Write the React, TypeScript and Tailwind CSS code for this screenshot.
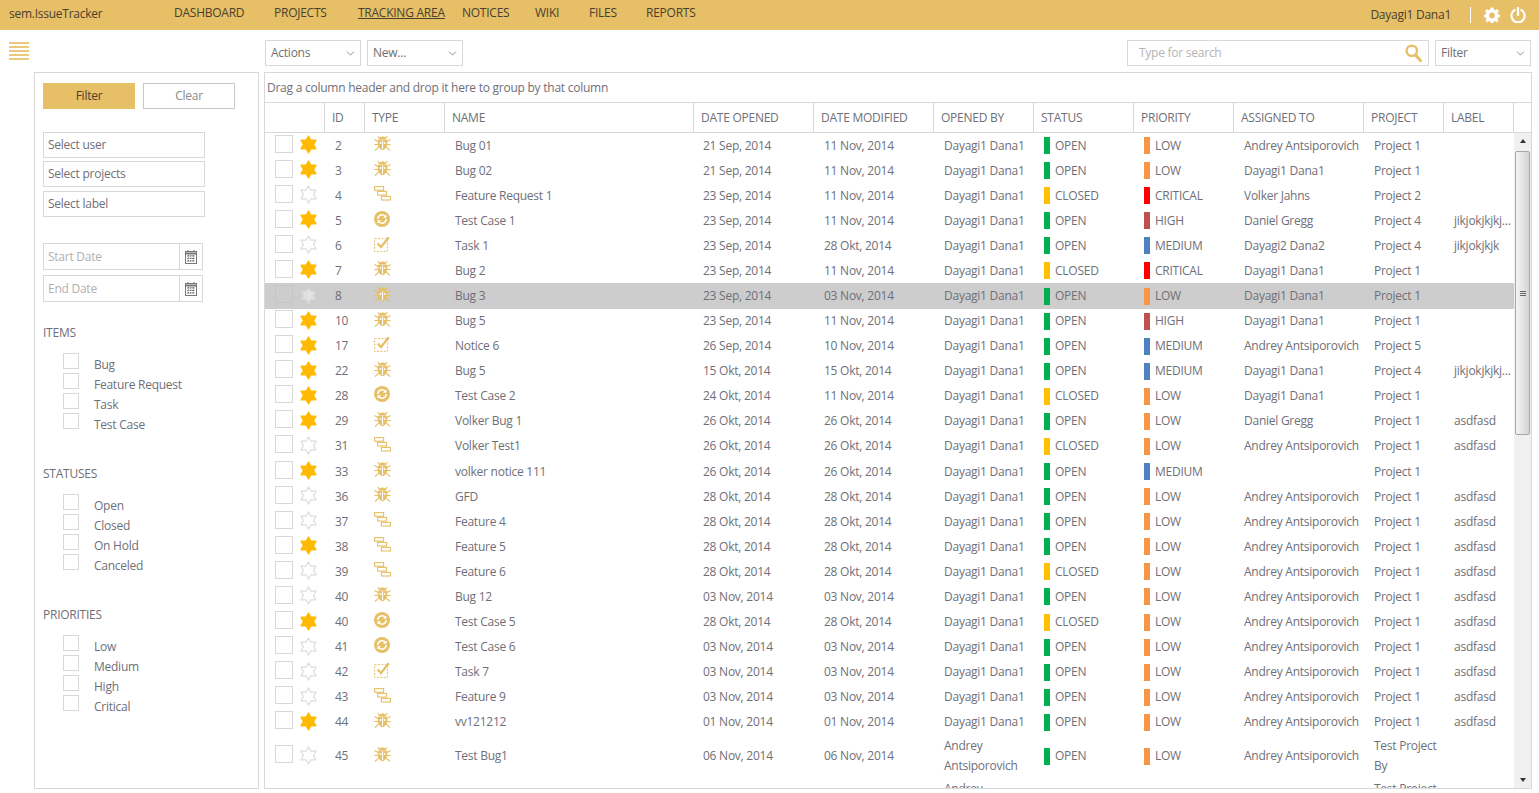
import React from "react";
import { ChevronDown } from "lucide-react";

const AD = "Andrey Antsiporovich";
const DD = "Dayagi1 Dana1";
type R = [number, number, string, string, string, string, string, string, string, string, string, string];
const rows: R[] = [
  [2, 1, "bug", "Bug 01", "21 Sep, 2014", "11 Nov, 2014", DD, "OPEN", "LOW", AD, "Project 1", ""],
  [3, 1, "bug", "Bug 02", "21 Sep, 2014", "11 Nov, 2014", DD, "OPEN", "LOW", DD, "Project 1", ""],
  [4, 0, "feature", "Feature Request 1", "23 Sep, 2014", "11 Nov, 2014", DD, "CLOSED", "CRITICAL", "Volker Jahns", "Project 2", ""],
  [5, 1, "test", "Test Case 1", "23 Sep, 2014", "11 Nov, 2014", DD, "OPEN", "HIGH", "Daniel Gregg", "Project 4", "jikjokjkjkj..."],
  [6, 0, "task", "Task 1", "23 Sep, 2014", "28 Okt, 2014", DD, "OPEN", "MEDIUM", "Dayagi2 Dana2", "Project 4", "jikjokjkjk"],
  [7, 1, "bug", "Bug 2", "23 Sep, 2014", "11 Nov, 2014", DD, "CLOSED", "CRITICAL", DD, "Project 1", ""],
  [8, 0, "bug", "Bug 3", "23 Sep, 2014", "03 Nov, 2014", DD, "OPEN", "LOW", DD, "Project 1", ""],
  [10, 1, "bug", "Bug 5", "23 Sep, 2014", "11 Nov, 2014", DD, "OPEN", "HIGH", DD, "Project 1", ""],
  [17, 1, "task", "Notice 6", "26 Sep, 2014", "10 Nov, 2014", DD, "OPEN", "MEDIUM", AD, "Project 5", ""],
  [22, 1, "bug", "Bug 5", "15 Okt, 2014", "15 Okt, 2014", DD, "OPEN", "MEDIUM", DD, "Project 4", "jikjokjkjkj..."],
  [28, 1, "test", "Test Case 2", "24 Okt, 2014", "11 Nov, 2014", DD, "CLOSED", "LOW", DD, "Project 1", ""],
  [29, 1, "bug", "Volker Bug 1", "26 Okt, 2014", "26 Okt, 2014", DD, "OPEN", "LOW", "Daniel Gregg", "Project 1", "asdfasd"],
  [31, 0, "feature", "Volker Test1", "26 Okt, 2014", "26 Okt, 2014", DD, "CLOSED", "LOW", AD, "Project 1", "asdfasd"],
  [33, 1, "bug", "volker notice 111", "26 Okt, 2014", "26 Okt, 2014", DD, "OPEN", "MEDIUM", "", "Project 1", ""],
  [36, 0, "bug", "GFD", "28 Okt, 2014", "28 Okt, 2014", DD, "OPEN", "LOW", AD, "Project 1", "asdfasd"],
  [37, 0, "feature", "Feature 4", "28 Okt, 2014", "28 Okt, 2014", DD, "OPEN", "LOW", AD, "Project 1", "asdfasd"],
  [38, 1, "feature", "Feature 5", "28 Okt, 2014", "28 Okt, 2014", DD, "OPEN", "LOW", AD, "Project 1", "asdfasd"],
  [39, 0, "feature", "Feature 6", "28 Okt, 2014", "28 Okt, 2014", DD, "CLOSED", "LOW", AD, "Project 1", "asdfasd"],
  [40, 0, "bug", "Bug 12", "03 Nov, 2014", "03 Nov, 2014", DD, "OPEN", "LOW", AD, "Project 1", "asdfasd"],
  [40, 1, "test", "Test Case 5", "28 Okt, 2014", "28 Okt, 2014", DD, "CLOSED", "LOW", AD, "Project 1", "asdfasd"],
  [41, 0, "test", "Test Case 6", "03 Nov, 2014", "03 Nov, 2014", DD, "OPEN", "LOW", AD, "Project 1", "asdfasd"],
  [42, 0, "task", "Task 7", "03 Nov, 2014", "03 Nov, 2014", DD, "OPEN", "LOW", AD, "Project 1", "asdfasd"],
  [43, 0, "feature", "Feature 9", "03 Nov, 2014", "03 Nov, 2014", DD, "OPEN", "LOW", AD, "Project 1", "asdfasd"],
  [44, 1, "bug", "vv121212", "01 Nov, 2014", "01 Nov, 2014", DD, "OPEN", "LOW", AD, "Project 1", "asdfasd"],
  [45, 0, "bug", "Test Bug1", "06 Nov, 2014", "06 Nov, 2014", "Andrey Antsiporovich", "OPEN", "LOW", AD, "Test Project By", ""],
  [46, 0, "bug", "Test Bug2", "06 Nov, 2014", "06 Nov, 2014", "Andrey Antsiporovich", "OPEN", "LOW", AD, "Test Project By", ""],
];

const gold = "#e6bf66";

function Star({ on }: { on: boolean }) {
  return (
    <svg width="17" height="19" viewBox="0 0 17 19">
      <path
        d="M8.5 1 L11 5.2 L16 5.2 L13.6 9.5 L16 13.8 L11 13.8 L8.5 18 L6 13.8 L1 13.8 L3.4 9.5 L1 5.2 L6 5.2 Z"
        fill={on ? "#ffb900" : "#ffffff"}
        stroke={on ? "#ffb900" : "#dcdcdc"}
        strokeWidth="1.2"
        strokeLinejoin="round"
      />
    </svg>
  );
}

function TypeIcon({ t }: { t: string }) {
  if (t === "bug")
    return (
      <svg width="17" height="17" viewBox="0 0 17 17" fill="none" stroke={gold} strokeWidth="1.1">
        <path d="M5.4 4 C5.4 1.4 11.6 1.4 11.6 4 Z" fill={gold} />
        <path d="M4.4 5.2 H12.6 C13.2 9 12.5 13.5 8.5 14.6 C4.5 13.5 3.8 9 4.4 5.2 Z" fill={gold} />
        <path d="M8.5 5.5 V14" stroke="#fff" />
        <circle cx="6.4" cy="8" r="0.9" fill="#fff" stroke="none" />
        <circle cx="10.6" cy="8" r="0.9" fill="#fff" stroke="none" />
        <path d="M3.8 1 L5.5 3.5 M13.2 1 L11.5 3.5 M0.5 4.5 L4 6.5 M16.5 4.5 L13 6.5 M0.3 9.5 H4 M16.7 9.5 H13 M1 15.5 L4.7 12.2 M16 15.5 L12.3 12.2" />
      </svg>
    );
  if (t === "feature")
    return (
      <svg width="17" height="15" viewBox="0 0 17 15" fill="#fff" stroke={gold} strokeWidth="1.1">
        <rect x="0.6" y="0.6" width="9" height="3.6" />
        <rect x="3.6" y="5.4" width="9" height="3.6" />
        <rect x="7.4" y="10.4" width="9" height="3.6" />
      </svg>
    );
  if (t === "test")
    return (
      <svg width="16" height="16" viewBox="0 0 16 16">
        <circle cx="8" cy="8" r="8" fill={gold} />
        <path d="M3.8 8 A4.2 4.2 0 0 1 11.4 5.6" fill="none" stroke="#fff" strokeWidth="1.5" />
        <path d="M12.2 8 A4.2 4.2 0 0 1 4.6 10.4" fill="none" stroke="#fff" strokeWidth="1.5" />
        <path d="M12.6 3.6 L12.4 7 L9 6.4 Z" fill="#fff" />
        <path d="M3.4 12.4 L3.6 9 L7 9.6 Z" fill="#fff" />
      </svg>
    );
  return (
    <svg width="16" height="16" viewBox="0 0 16 16" fill="none" stroke={gold}>
      <rect x="0.6" y="2.6" width="12.8" height="12.8" strokeDasharray="2 1.4" />
      <path d="M3.6 7.5 L7 11 L14.8 1.2" strokeWidth="2.2" />
    </svg>
  );
}

const statusColor: Record<string, string> = { OPEN: "bg-[#00b050]", CLOSED: "bg-[#ffc000]" };
const prioColor: Record<string, string> = {
  LOW: "bg-[#f79646]",
  CRITICAL: "bg-[#ff0000]",
  HIGH: "bg-[#c0504d]",
  MEDIUM: "bg-[#4f81bd]",
};

function Select({ label, w }: { label: string; w: string }) {
  return (
    <div className={`${w} h-[26px] border border-[#d8d8d8] flex items-center justify-between pl-[5px] pr-[3px] text-[12px] text-[#707070]`}>
      <span>{label}</span>
      <ChevronDown size={13} strokeWidth={1.3} className="text-[#666]" />
    </div>
  );
}

function Box({ label, mb }: { label: string; mb: string }) {
  return (
    <div className={`w-[162px] h-[26px] border border-[#d8d8d8] flex items-center pl-[4px] text-[12px] text-[#6f6f78] ${mb}`}>
      {label}
    </div>
  );
}

function DateBox({ label, mb }: { label: string; mb: string }) {
  return (
    <div className={`w-[160px] h-[27px] border border-[#d8d8d8] flex items-center text-[12px] text-[#b0b0b0] ${mb}`}>
      <span className="flex-1 pl-[4px]">{label}</span>
      <span className="w-[23px] h-full border-l border-[#d8d8d8] flex items-center justify-center">
        <svg width="12" height="14" viewBox="0 0 12 14" fill="none" stroke="#777">
          <rect x="0.5" y="1.5" width="11" height="12" />
          <path d="M0.5 3.5 H11.5" strokeWidth="2" />
          <path d="M3 0 V2 M9 0 V2" />
          <path d="M2 6 H10 M2 8.5 H10 M2 11 H10 M3.5 5 V12.5 M6 5 V12.5 M8.5 5 V12.5" strokeDasharray="1.5 1" />
        </svg>
      </span>
    </div>
  );
}

function Group({ title, items, mb }: { title: string; items: string[]; mb: string }) {
  return (
    <div className={mb}>
      <div className="text-[12px] leading-[16px] text-[#6f6f78] mb-[12px]">{title}</div>
      <div className="flex flex-col pl-[20px]">
        {items.map((i) => (
          <div key={i} className="h-[20px] flex items-start text-[12px] text-[#6f6f78]">
            <span className="w-[16px] h-[16px] border border-[#d8d8d8]" />
            <span className="ml-[15px] mt-[4px] leading-[16px]">{i}</span>
          </div>
        ))}
      </div>
    </div>
  );
}

const cols = [
  ["", "w-[60px]"],
  ["ID", "w-[40px]"],
  ["TYPE", "w-[80px]"],
  ["NAME", "w-[249px]"],
  ["DATE OPENED", "w-[120px]"],
  ["DATE MODIFIED", "w-[120px]"],
  ["OPENED BY", "w-[100px]"],
  ["STATUS", "w-[100px]"],
  ["PRIORITY", "w-[100px]"],
  ["ASSIGNED TO", "w-[130px]"],
  ["PROJECT", "w-[80px]"],
  ["LABEL", "w-[70px]"],
];

function Row({ r, i }: { r: R; i: number }) {
  const selected = r[0] === 8;
  const h = i === 24 ? "h-[42px] pt-[1px]" : i === 25 ? "h-[44px]" : "h-[25.08px]";
  return (
    <div className={`flex items-center text-[12px] leading-[20px] text-[#6f6f78] shrink-0 ${h} ${selected ? "bg-[#cdcdcd]" : ""}`}>
      <div className="w-[60px] flex items-center pl-[10px] shrink-0">
        <span className={`w-[18px] h-[18px] border -mt-[4px] ${selected ? "border-[#c4c4c4]" : "border-[#d8d8d8]"}`} />
        <span className={`ml-[7px] -mt-[2px] flex ${selected ? "opacity-40" : ""}`}>
          <Star on={!!r[1] && !selected} />
        </span>
      </div>
      <div className="w-[40px] pl-[10px] shrink-0">{r[0]}</div>
      <div className="w-[80px] pl-[9px] shrink-0 flex -mt-[4px]"><TypeIcon t={r[2]} /></div>
      <div className="w-[249px] pl-[10px] shrink-0">{r[3]}</div>
      <div className="w-[120px] pl-[9px] shrink-0">{r[4]}</div>
      <div className="w-[120px] pl-[10px] shrink-0">{r[5]}</div>
      <div className="w-[100px] pl-[10px] pr-[8px] shrink-0">{r[6]}</div>
      <div className="w-[100px] pl-[10px] shrink-0 flex items-center">
        <span className={`w-[6px] h-[17px] mr-[5px] ${statusColor[r[7]]}`} />
        {r[7]}
      </div>
      <div className="w-[100px] pl-[10px] shrink-0 flex items-center">
        <span className={`w-[6px] h-[17px] mr-[5px] ${prioColor[r[8]]}`} />
        {r[8]}
      </div>
      <div className="w-[130px] pl-[10px] shrink-0 whitespace-nowrap">{r[9]}</div>
      <div className="w-[80px] pl-[10px] pr-[4px] shrink-0">{r[10]}</div>
      <div className="w-[70px] pl-[10px] shrink-0 whitespace-nowrap">{r[11]}</div>
    </div>
  );
}

export default function App() {
  return (
    <div className="w-[1539px] h-[793px] overflow-hidden bg-white flex flex-col font-['Open_Sans',sans-serif] tracking-[-0.25px]">
      <header className="h-[30px] shrink-0 bg-[#e6bf66] flex items-center text-[12px] text-[#4a4030]">
        <span className="ml-[9px] w-[165px] mt-[-2px]">sem.IssueTracker</span>
        <nav className="flex mt-[-4px]">
          <span className="w-[100px]">DASHBOARD</span>
          <span className="w-[84px]">PROJECTS</span>
          <span className="w-[105px] underline">TRACKING AREA</span>
          <span className="w-[72px]"><span className="relative left-[-1px]">NOTICES</span></span>
          <span className="w-[54px]">WIKI</span>
          <span className="w-[57px]">FILES</span>
          <span>REPORTS</span>
        </nav>
        <span className="ml-auto">Dayagi1 Dana1</span>
        <span className="w-px h-[16px] bg-white ml-[19px]" />
        <svg className="ml-[13px]" width="16" height="16" viewBox="0 0 16 16" fill="#fff">
          <path fillRule="evenodd" d="M6.6 0.5 H9.4 L9.9 2.6 L11.3 3.2 L13.2 2.1 L15 4.2 L13.6 5.9 L14 7.2 L16 7.8 V10 L14 10.5 L13.5 11.9 L14.6 13.7 L12.7 15.4 L11 14.1 L9.7 14.6 L9.2 16 H6.8 L6.3 14.6 L5 14.1 L3.3 15.4 L1.4 13.7 L2.5 11.9 L2 10.5 L0 10 V7.8 L2 7.2 L2.4 5.9 L1 4.2 L2.8 2.1 L4.7 3.2 L6.1 2.6 Z M8 5.6 A2.8 2.8 0 1 0 8 11.2 A2.8 2.8 0 1 0 8 5.6 Z" />
        </svg>
        <svg className="ml-[10px] mr-[13px]" width="16" height="16" viewBox="0 0 16 16" fill="none" stroke="#fff" strokeWidth="2.2" strokeLinecap="round">
          <path d="M4.6 3 A6.6 6.6 0 1 0 11.4 3" />
          <path d="M8 1 V8" />
        </svg>
      </header>

      <div className="h-[42px] shrink-0 relative flex items-start pt-[10px]">
        <div className="ml-[9px] mt-[2px] w-[20px] flex flex-col gap-[2px]">
          <span className="h-[2px] bg-[#ecc97c]" />
          <span className="h-[2px] bg-[#ecc97c]" />
          <span className="h-[2px] bg-[#ecc97c]" />
          <span className="h-[2px] bg-[#ecc97c]" />
          <span className="h-[2px] bg-[#ecc97c]" />
        </div>
        <div className="ml-[236px] flex gap-[6px]">
          <Select label="Actions" w="w-[96px]" />
          <Select label="New..." w="w-[96px]" />
        </div>
        <div className="ml-auto mr-[8px] flex gap-[6px]">
          <div className="w-[302px] h-[26px] border border-[#d8d8d8] flex items-center pl-[11px] pr-[6px] text-[12px] text-[#b4b4b4]">
            <span className="flex-1">Type for search</span>
            <svg width="17" height="18" viewBox="0 0 17 18" fill="none" stroke={gold}>
              <circle cx="6.8" cy="6.8" r="5.2" strokeWidth="2.4" />
              <path d="M10.5 11 L15.5 16.5" strokeWidth="3.2" strokeLinecap="round" />
            </svg>
          </div>
          <Select label="Filter" w="w-[96px]" />
        </div>
      </div>

      <div className="flex-1 min-h-0 flex items-stretch pb-[4px]">
        <aside className="ml-[34px] w-[225px] border border-[#d8d8d8] pl-[8px] pt-[10px] shrink-0">
          <div className="flex gap-[8px] mb-[23px]">
            <div className="w-[92px] h-[26px] bg-[#e6bf66] flex items-center justify-center text-[12px] text-[#4a4030]">Filter</div>
            <div className="w-[92px] h-[26px] border border-[#c8c8c8] flex items-center justify-center text-[12px] text-[#8a8a8a]">Clear</div>
          </div>
          <Box label="Select user" mb="mb-[3px]" />
          <Box label="Select projects" mb="mb-[4px]" />
          <Box label="Select label" mb="mb-[26px]" />
          <DateBox label="Start Date" mb="mb-[5px]" />
          <DateBox label="End Date" mb="mb-[23px]" />
          <Group title="ITEMS" items={["Bug", "Feature Request", "Task", "Test Case"]} mb="mb-[33px]" />
          <Group title="STATUSES" items={["Open", "Closed", "On Hold", "Canceled"]} mb="mb-[33px]" />
          <Group title="PRIORITIES" items={["Low", "Medium", "High", "Critical"]} mb="" />
        </aside>

        <main className="ml-[5px] w-[1268px] border border-[#d8d8d8] flex flex-col shrink-0 min-h-0">
          <div className="h-[30px] shrink-0 flex items-center pl-[2px] text-[12px] text-[#6f6f78] border-b border-[#d8d8d8]">
            Drag a column header and drop it here to group by that column
          </div>
          <div className="h-[30px] shrink-0 flex border-b border-[#d8d8d8] text-[12px] text-[#6f6f78]">
            {cols.map(([c, w], i) => (
              <div key={i} className={`${w} shrink-0 border-r border-[#d8d8d8] flex items-center pl-[7px]`}>
                {c}
              </div>
            ))}
          </div>
          <div className="flex-1 min-h-0 flex">
            <div className="w-[1249px] shrink-0 overflow-hidden flex flex-col">
              {rows.map((r, i) => (
                <Row key={i} r={r} i={i} />
              ))}
            </div>
            <div className="w-[17px] bg-[#f0f0f0] flex flex-col items-center justify-between py-[6px] relative">
              <span className="w-0 h-0 border-x-[3.5px] border-x-transparent border-b-[4px] border-b-[#333]" />
              <span className="w-0 h-0 border-x-[3.5px] border-x-transparent border-t-[4px] border-t-[#333]" />
              <span className="absolute left-[1px] top-[18px] w-[15px] h-[284px] rounded-[2px] border border-[#a8a8a8] bg-gradient-to-r from-[#f4f4f4] to-[#d4d4d4] flex flex-col items-center justify-center gap-[1px]">
                <span className="w-[6px] h-px bg-[#666]" />
                <span className="w-[6px] h-px bg-[#666]" />
                <span className="w-[6px] h-px bg-[#666]" />
              </span>
            </div>
          </div>
        </main>
      </div>
    </div>
  );
}
